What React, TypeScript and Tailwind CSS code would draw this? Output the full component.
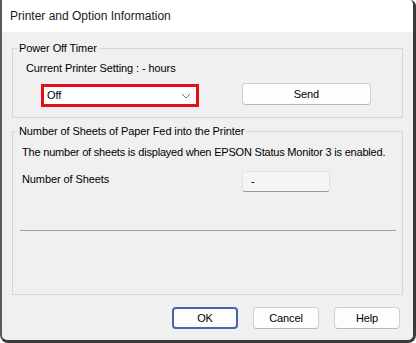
import React from "react";

function GroupBox({ title, className, children }: { title: string; className?: string; children: React.ReactNode }) {
  return (
    <fieldset className={`border border-[#d6d6d6] px-[4px] ${className ?? ""}`}>
      <legend className="whitespace-nowrap px-[2px] text-[11px] leading-[14px] text-black">{title}</legend>
      {children}
    </fieldset>
  );
}

function DialogButton({ label, primary }: { label: string; primary?: boolean }) {
  return (
    <button
      className={`h-[22px] w-[66px] rounded-[4px] bg-[#fdfdfd] text-[11px] leading-none text-black ${
        primary ? "border-2 border-[#4a63ad]" : "border border-[#d0d0d0] border-b-[#b8b8b8]"
      }`}
    >
      {label}
    </button>
  );
}

export default function App() {
  return (
    <div className="h-[343px] w-[416px] bg-white font-['Liberation_Sans',Arial,sans-serif] tracking-[-0.1px]">
      <div className="flex h-full flex-col overflow-hidden rounded-b-[8px] rounded-tr-[6px] border-b-[3px] border-l-2 border-r-[3px] border-[#3a3a3a] border-l-[#5a5a5a]">
        {/* Title bar */}
        <div className="flex h-[32px] shrink-0 items-center bg-white pl-[8px]">
          <span className="text-[12px] tracking-normal text-[#1a1a1a]">Printer and Option Information</span>
        </div>

        {/* Body */}
        <div className="flex flex-1 flex-col bg-[#f0f0f0] px-[10px] pb-[10px] pt-[9px]">
          <GroupBox title="Power Off Timer" className="pb-[10px]">
            <p className="ml-[9px] mt-[6px] whitespace-nowrap text-[11px] leading-[14px] text-black">
              Current Printer Setting : - hours
            </p>
            <div className="ml-[24px] mt-[8px] flex items-start">
              <div className="mt-[1px] flex h-[23px] w-[158px] items-center justify-between border-[3px] border-[#e3101b] bg-white pl-[3px] pr-[5px]">
                <span className="text-[11px] leading-none text-black">Off</span>
                <svg width="10" height="6" viewBox="0 0 10 6" fill="none">
                  <path d="M1 1l4 4 4-4" stroke="#707070" strokeWidth="1" />
                </svg>
              </div>
              <button className="ml-[43px] h-[22px] w-[129px] rounded-[4px] border border-[#d0d0d0] border-b-[#b8b8b8] bg-[#fdfdfd] text-[11px] leading-none text-black">
                Send
              </button>
            </div>
          </GroupBox>

          <GroupBox title="Number of Sheets of Paper Fed into the Printer" className="mt-[6px] pb-[63px]">
            <p className="ml-[5px] mt-[7px] whitespace-nowrap text-[11px] leading-[14px] tracking-[-0.2px] text-black">
              The number of sheets is displayed when EPSON Status Monitor 3 is enabled.
            </p>
            <div className="mt-[12px] flex items-start">
              <span className="ml-[5px] mt-[1px] w-[220px] whitespace-nowrap text-[11px] leading-[14px] text-black">
                Number of Sheets
              </span>
              <div className="flex h-[21px] w-[88px] items-center rounded-[3px] border border-[#e2e2e2] border-b-[#9a9a9a] bg-[#f5f5f5] pl-[8px] text-[11px] text-black">
                -
              </div>
            </div>
            <div className="ml-[3px] mr-[2px] mt-[38px] h-px bg-[#a0a0a0]" />
          </GroupBox>

          <div className="mt-[12px] flex justify-end gap-[15px] pr-[3px]">
            <DialogButton label="OK" primary />
            <DialogButton label="Cancel" />
            <DialogButton label="Help" />
          </div>
        </div>
      </div>
    </div>
  );
}
